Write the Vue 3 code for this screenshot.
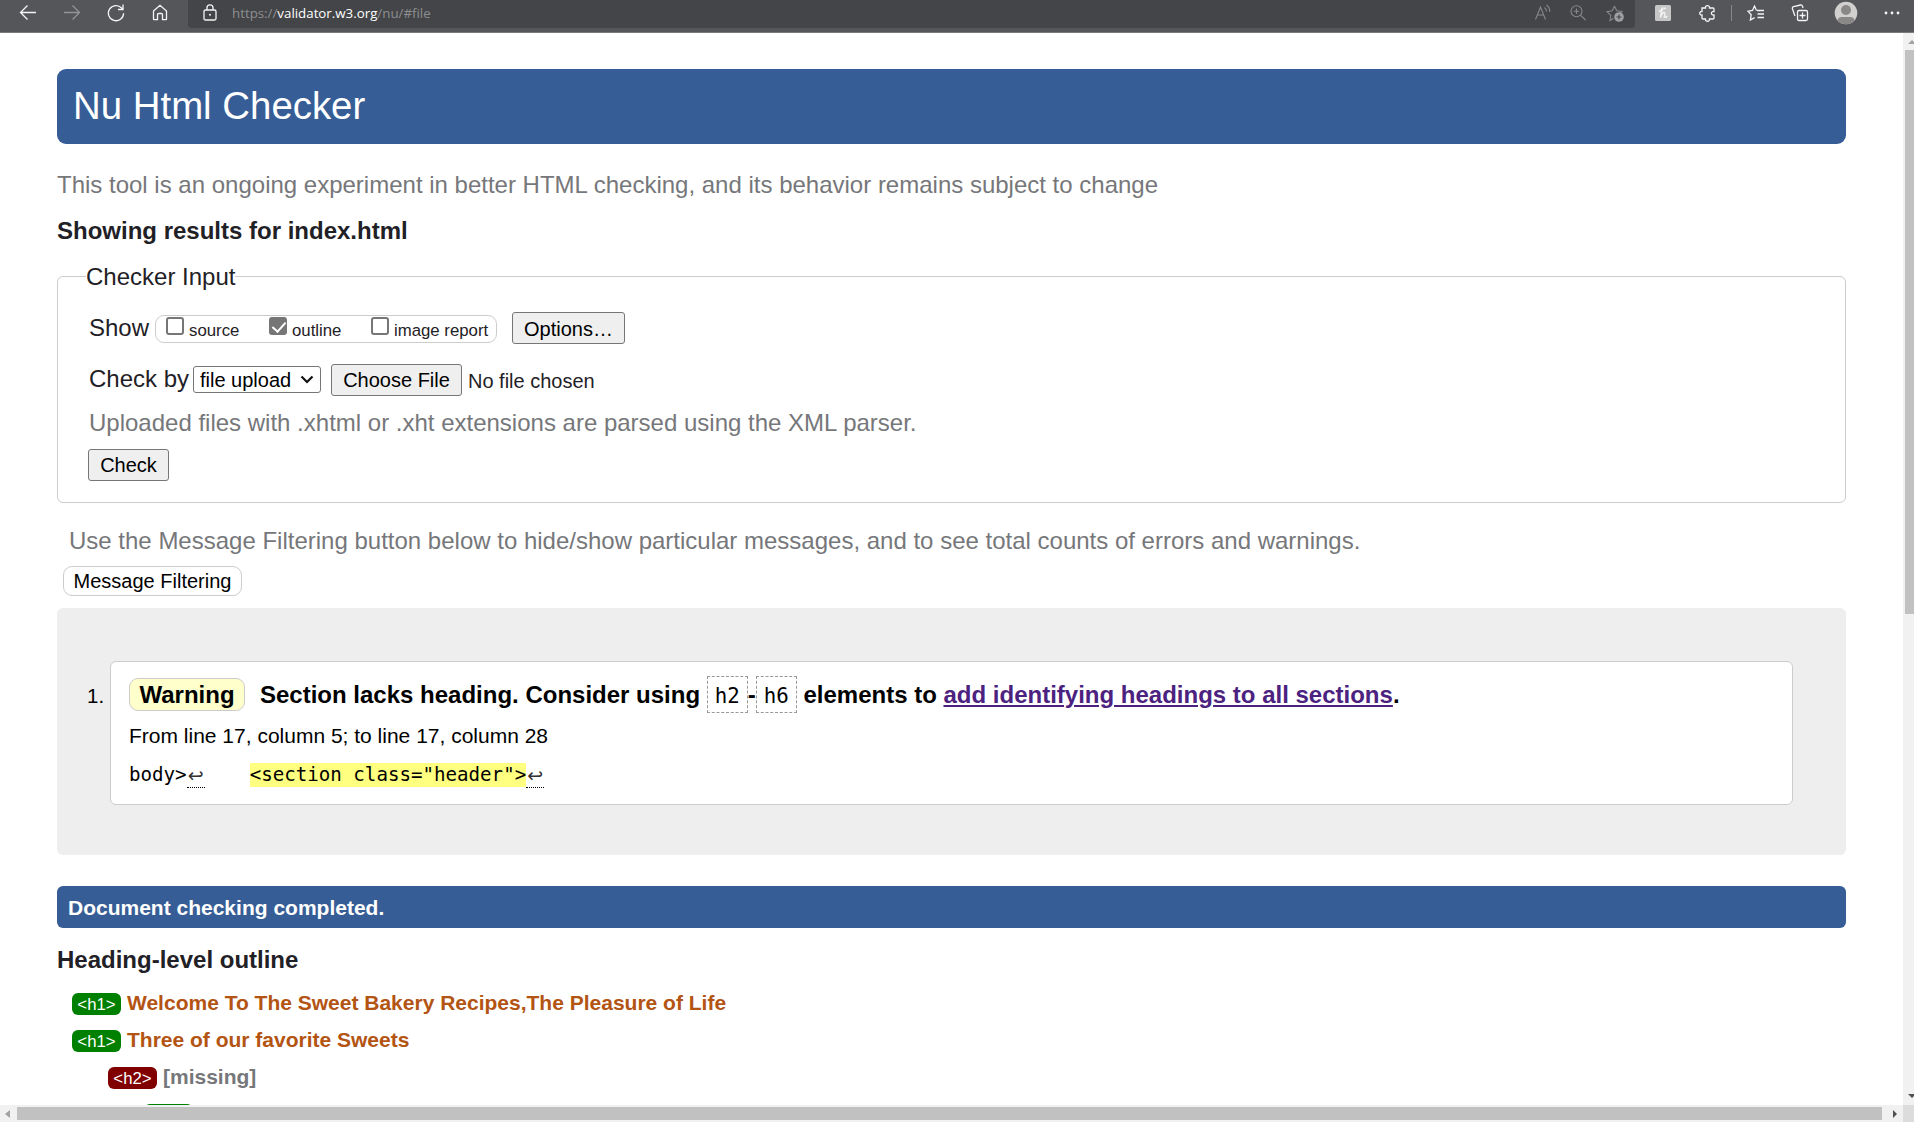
<script setup>
const outline = [
  { tag: '<h1>', text: 'Welcome To The Sweet Bakery Recipes,The Pleasure of Life', level: 1 },
  { tag: '<h1>', text: 'Three of our favorite Sweets', level: 1 },
  { tag: '<h2>', text: '[missing]', level: 2, missing: true },
  { tag: '', text: '', level: 3 },
]
</script>

<template>
  <div class="window">
    <header class="toolbar">
      <nav class="nav-icons">
        <svg width="18" height="18" viewBox="0 0 18 18"><path d="M17 8.500H1.500M8.500 1.500l-7 7 7 7" /></svg>
        <svg class="dim" width="18" height="18" viewBox="0 0 18 18"><path d="M1 8.500h15.500M9.500 1.500l7 7-7 7" /></svg>
        <svg width="18" height="18" viewBox="0 0 18 18"><path d="M16.600 9.200A7.600 7.600 0 1 1 14.600 4L16 5.400M16 .5v5h-5" /></svg>
        <svg width="18" height="18" viewBox="0 0 18 18"><path d="M2.500 7 9 1.300 15.500 7v8.200q0 .5-.5.5h-3.500V10.500q0-1-1-1h-3q-1 0-1 1v5.200H3q-.5 0-.5-.5z" /></svg>
      </nav>
      <div class="address">
        <svg class="lock" width="14" height="18" viewBox="0 0 14 18"><path d="M2.500 6h9q1.500 0 1.500 1.500v7q0 1.500-1.500 1.500h-9Q1 16 1 14.500v-7Q1 6 2.500 6zM4 6V3.800a3 3 0 0 1 6 0V6" /><circle class="solid" cx="7" cy="10.800" r="1" /></svg>
        <span class="url">https://<b>validator.w3.org</b>/nu/#file</span>
        <div class="address-icons">
          <svg width="18" height="18" viewBox="0 0 18 18"><path d="M2.500 15.500 7.500 3l5 12.500M4.300 11h6.500M11.500 3.500q2 1.500 2 4M13.500 1q3.500 2.500 3.200 7" /></svg>
          <svg width="18" height="18" viewBox="0 0 18 18"><path d="M13 7.200A5.500 5.500 0 1 1 2 7.200a5.500 5.500 0 0 1 11 0zM11.400 11.100 16.500 16M7.500 4.500v5.400M4.800 7.200h5.400" /></svg>
          <svg width="20" height="20" viewBox="0 0 20 20"><path d="m9.500 2 2.200 4.700 5.300.7-3.300 3.300M8.500 14.300l-3.500 2.200.9-5L2 7.700l5.300-1L9.500 2" /><circle class="solid" cx="14" cy="13" r="4.800" /><path class="cut" d="M14 10.500v5M11.500 13h5" /></svg>
        </div>
      </div>
      <div class="tools">
        <svg class="ext" width="16" height="16" viewBox="0 0 16 16"><rect class="tile" width="16" height="16" rx="1.500" /><path d="M4 6q4.200-.8 4-2.800-1-.8-1.400 1.500L5.500 12.500Q7 7.500 9 7.500q1.600.2.200 4.500 1.600.8 3-1M9 3.500l2-.5" /></svg>
        <svg class="puzzle" width="18" height="18" viewBox="0 0 18 18"><path d="M3 4h3.500c-.6-3 4.500-3.500 4 0H14q1 0 1 1v2.500c-3.500-.5-3.500 4 0 3.500V14q0 1-1 1h-3.500c.5 3-4.500 3-4 0H4q-1 0-1-1v-3c-3 .5-3-4 0-3.500z" /></svg>
        <i class="divider"></i>
        <svg class="fav" width="18" height="18" viewBox="0 0 18 18"><path d="M9.500 6.500 7.500 2 5.500 6.500 1 7.200l3.200 3.500L3.400 16l4.200-2.400M10 6.500h7M10.500 10H17M10.500 13.500H17" /></svg>
        <svg class="coll" width="18" height="18" viewBox="0 0 18 18"><path d="M8 6.500h7q1.500 0 1.500 1.500v7q0 1.500-1.500 1.500H8q-1.500 0-1.500-1.500V8Q6.500 6.500 8 6.500zM11.500 8.500v6M8.500 11.500h6M4 12 1.500 5Q1 3.200 2.500 2.700L9.500 1q1.500-.3 2 1.200l.5 1.800" /></svg>
        <svg class="avatar" width="24" height="24" viewBox="0 0 24 24"><circle cx="12" cy="12" r="11.300" fill="#d2d0ce" stroke="none" /><circle cx="12" cy="9" r="5" fill="#8a8886" stroke="none" /><path d="M3.500 19q1-3 4-3h9q3 0 4 3-3.500 4.300-8.500 4.300T3.500 19z" fill="#8a8886" stroke="none" /></svg>
        <svg class="more" width="16" height="4" viewBox="0 0 16 4"><circle class="solid" cx="2" cy="2" r="1.400" /><circle class="solid" cx="8" cy="2" r="1.400" /><circle class="solid" cx="14" cy="2" r="1.400" /></svg>
      </div>
    </header>

    <div class="viewport">
      <main class="page">
        <h1>Nu Html Checker</h1>
        <p class="intro">This tool is an ongoing experiment in better HTML checking, and its behavior remains subject to change</p>
        <h2>Showing results for index.html</h2>

        <fieldset>
          <legend>Checker Input</legend>
          <div class="row show-row">
            <span class="label">Show</span>
            <div class="checks">
              <label class="c1"><input type="checkbox" /><span>source</span></label>
              <label class="c2"><input type="checkbox" checked /><span>outline</span></label>
              <label class="c3"><input type="checkbox" /><span>image report</span></label>
            </div>
            <button class="options">Options…</button>
          </div>
          <div class="row by-row">
            <span class="label">Check by</span>
            <div class="select"><span>file upload</span><svg width="14" height="9" viewBox="0 0 14 9"><path d="m1.500 1.500 5.500 5.500 5.500-5.500" /></svg></div>
            <button class="choose">Choose File</button>
            <span class="nofile">No file chosen</span>
          </div>
          <p class="hint">Uploaded files with .xhtml or .xht extensions are parsed using the XML parser.</p>
          <button class="check">Check</button>
        </fieldset>

        <p class="filter-hint">Use the Message Filtering button below to hide/show particular messages, and to see total counts of errors and warnings.</p>
        <button class="filter">Message Filtering</button>

        <section class="results">
          <span class="num">1.</span>
          <div class="message">
            <p class="title"><span class="warning">Warning</span><span class="text">Section lacks heading. Consider using <code>h2</code>-<code>h6</code> elements to <a>add identifying headings to all sections</a>.</span></p>
            <p class="location">From line 17, column 5; to line 17, column 28</p>
            <p class="extract"><span>body&gt;</span><span class="lf">↩</span><span class="gap"></span><mark>&lt;section class="header"&gt;</mark><span class="lf">↩</span></p>
          </div>
        </section>

        <p class="done">Document checking completed.</p>
        <h2 class="outline-title">Heading-level outline</h2>
        <ul class="outline">
          <li v-for="(item, i) in outline" :key="i" :class="['level' + item.level, { missing: item.missing }]">
            <span class="tag">{{ item.tag }}</span><span class="heading">{{ item.text }}</span>
          </li>
        </ul>
      </main>
      <aside class="vbar">
        <svg class="up" width="8" height="5" viewBox="0 0 8 5"><path d="M0 5 4 1l4 4z" fill="#a3a3a3" /></svg>
        <i class="thumb"></i>
        <svg class="down" width="8" height="5" viewBox="0 0 8 5"><path d="M0 0h8L4 4z" fill="#505050" /></svg>
      </aside>
    </div>
    <footer class="hbar">
      <svg class="left" width="5" height="8" viewBox="0 0 5 8"><path d="M5 0v8L0 4z" fill="#a3a3a3" /></svg>
      <i class="thumb"></i>
      <svg class="right" width="5" height="8" viewBox="0 0 5 8"><path d="M0 0v8l4-4z" fill="#505050" /></svg>
      <i class="corner"></i>
    </footer>
  </div>
</template>

<style>
body {
  overflow: hidden;
}
</style>

<style scoped>
* {
  box-sizing: border-box;
}
.window {
  width: 1914px;
  height: 1122px;
  display: flex;
  flex-direction: column;
  overflow: hidden;
  background: #fff;
  color: #1f2126;
  font: 24px/30px "Liberation Sans", Arial, sans-serif;
}
h1, h2, p, ul, fieldset {
  margin: 0;
  padding: 0;
}
.toolbar {
  flex: none;
  height: 33px;
  display: flex;
  background: #55565a;
  border-bottom: 1px solid #7b7b7d;
}
.toolbar svg {
  flex: none;
  fill: none;
  stroke: #f4f4f4;
  stroke-width: 1.3;
}
.toolbar svg .solid {
  fill: #f4f4f4;
  stroke: none;
}
.nav-icons {
  width: 188px;
  padding: 4px 0 0 19px;
  display: flex;
  gap: 26px;
}
.toolbar .nav-icons .dim {
  stroke: #929396;
}
.address {
  width: 1447px;
  height: 28px;
  padding: 4px 10px 0 15px;
  display: flex;
  background: #444548;
  border-radius: 0 0 4px 4px;
}
.url {
  margin: -1px 0 0 15px;
  color: #8d8e90;
  font: 13.3px/20px "Open Sans", "Noto Sans", sans-serif;
}
.url b {
  color: #fff;
  font-weight: 400;
}
.address-icons {
  margin-left: auto;
  display: flex;
  gap: 18px;
}
.toolbar .address-icons svg {
  stroke: #87888b;
  stroke-width: 1.1;
}
.toolbar .address-icons .solid {
  fill: #a0a0a2;
}
.address-icons .cut {
  stroke: #444548;
}
.tools {
  display: flex;
  align-items: flex-start;
}
.ext {
  margin: 5px 0 0 20px;
}
.tools .tile {
  fill: #c6c6c6;
  stroke: none;
}
.puzzle {
  margin: 4px 0 0 28px;
}
.divider {
  width: 1px;
  height: 16px;
  margin: 5px 0 0 14px;
  background: #87888b;
}
.fav {
  margin: 4px 0 0 15px;
}
.coll {
  margin: 4px 0 0 26px;
}
.avatar {
  margin: 1px 0 0 25px;
}
.more {
  margin: 11px 0 0 26px;
}
.viewport {
  height: 1072px;
  display: flex;
  overflow: hidden;
}
.page {
  width: 1903px;
  padding: 36px 57px 0;
}
h1 {
  height: 75px;
  padding: 0 16px;
  color: #fff;
  background: #365d95;
  border-radius: 9px;
  font-size: 38.400px;
  font-weight: 400;
  line-height: 73px;
}
.intro {
  margin-top: 26px;
  color: #76777a;
}
h2 {
  margin-top: 16px;
  font-size: 24px;
  line-height: 30px;
}
fieldset {
  height: 241px;
  margin-top: 16px;
  padding-left: 30px;
  border: 1px solid #ccc;
  border-radius: 6px;
  min-width: 0;
}
legend {
  margin-left: -2px;
  padding: 0;
  height: 29px;
}
.row {
  display: flex;
  align-items: flex-start;
}
.show-row {
  height: 52px;
  padding-top: 21px;
}
.show-row .label {
  width: 67px;
  margin-top: 1px;
  padding-left: 1px;
}
.checks {
  width: 342px;
  height: 28px;
  margin-top: 3px;
  padding-left: 10px;
  display: flex;
  border: 1px solid #ccc;
  border-radius: 9px;
  font-size: 16.800px;
  line-height: 30px;
}
label {
  display: flex;
}
.c1 {
  width: 103px;
}
.c2 {
  width: 102px;
}
label span {
  margin-left: 5px;
  white-space: nowrap;
}
input {
  appearance: none;
  flex: none;
  width: 18px;
  height: 18px;
  margin: 1px 0 0;
  border: 2px solid #767676;
  border-radius: 3px;
}
input:checked {
  background: #767676;
}
input:checked::after {
  content: "";
  display: block;
  width: 6px;
  height: 11px;
  margin: 0 0 0 4px;
  border: solid #fff;
  border-width: 0 2.500px 2.500px 0;
  transform: rotate(42deg);
}
button {
  height: 32px;
  padding: 0;
  background: #efefef;
  border: 1px solid #767676;
  border-radius: 3px;
  color: #000;
  font: 20px/28px "Liberation Sans", Arial, sans-serif;
}
.options {
  width: 113px;
  margin-left: 15px;
  padding-top: 1px;
}
.by-row {
  height: 52px;
  padding-top: 20px;
}
.by-row .label {
  width: 105px;
  margin-top: 1px;
  padding-left: 1px;
}
.select {
  width: 128px;
  height: 27px;
  margin-top: 3px;
  padding: 0 6px;
  display: flex;
  align-items: center;
  justify-content: space-between;
  border: 1px solid #767676;
  border-radius: 3px;
  color: #000;
  font-size: 20px;
  line-height: 24px;
}
.select svg {
  fill: none;
  stroke: #111;
  stroke-width: 2.200;
}
.choose {
  width: 131px;
  margin: 1px 0 0 10px;
}
.nofile {
  margin: 2px 0 0 6px;
  font-size: 20px;
  line-height: 32px;
}
.hint {
  margin-top: 13px;
  padding-left: 1px;
  color: #76777a;
}
.check {
  display: block;
  width: 81px;
  margin-top: 11px;
  padding-bottom: 1px;
}
.filter-hint {
  margin: 23px 0 0 12px;
  color: #76777a;
}
.filter {
  display: block;
  width: 179px;
  height: 30px;
  margin: 10px 0 0 6px;
  background: #fff;
  border: 1px solid #ccc;
  border-radius: 9px;
}
.results {
  height: 247px;
  margin-top: 12px;
  padding: 53px 0 0 30px;
  display: flex;
  background: #eee;
  border-radius: 6px;
  color: #000;
}
.num {
  width: 23px;
  margin-top: 20px;
  font-size: 20.500px;
}
.message {
  width: 1683px;
  height: 144px;
  padding: 13px 0 0 18px;
  background: #fff;
  border: 1px solid #ccc;
  border-radius: 6px;
}
.title {
  height: 40px;
  display: flex;
  font-weight: 700;
  line-height: 40px;
}
.warning {
  width: 116px;
  height: 33px;
  margin: 3px 15px 0 0;
  border: 1px solid #ccc;
  border-radius: 9px;
  background: #ffc;
  text-align: center;
  line-height: 32px;
}
code {
  display: inline-block;
  width: 41px;
  height: 37px;
  border: 1px dashed #999;
  text-align: center;
  font: 400 20.800px/38px "DejaVu Sans Mono", monospace;
}
a {
  color: #4c2280;
  text-decoration: underline 2px;
  text-underline-offset: 2px;
}
.location {
  margin-top: 6px;
  font-size: 21px;
}
.extract {
  margin-top: 9px;
  display: flex;
  font: 19.150px/30px "DejaVu Sans Mono", monospace;
}
.extract .lf {
  width: 18px;
  height: 28px;
  border-bottom: 1px dotted #000;
  text-align: center;
  color: #333;
  font: 19px/31px "DejaVu Sans", sans-serif;
}
.gap {
  width: 45px;
}
mark {
  height: 24px;
  margin-top: 3px;
  background: #ffff80;
  line-height: 24px;
}
.done {
  height: 42px;
  margin-top: 31px;
  padding-left: 11px;
  border-radius: 6px;
  background: #365d95;
  color: #fff;
  font-size: 21px;
  font-weight: 700;
  line-height: 43px;
}
.outline-title {
  margin-top: 17px;
}
.outline {
  margin-top: 11px;
  list-style: none;
}
li {
  height: 37px;
  padding-top: 2px;
  display: flex;
  align-items: flex-start;
  color: #b35413;
  font-size: 21px;
  font-weight: 700;
}
.level1 {
  padding-left: 15px;
}
.level2 {
  padding-left: 51px;
}
.level3 {
  padding-left: 87px;
}
.tag {
  width: 49px;
  height: 22px;
  margin: 5px 6px 0 0;
  border-radius: 6px;
  background: #008000;
  color: #fff;
  text-align: center;
  font-size: 16.800px;
  font-weight: 400;
  line-height: 23px;
}
.missing .tag {
  background: #800000;
}
.missing .heading {
  color: #76777a;
}
.vbar {
  width: 11px;
  display: flex;
  flex-direction: column;
  background: #f1f1f1;
}
.vbar svg {
  flex: none;
  margin-left: 5px;
}
.vbar .up {
  margin-top: 6px;
}
.vbar .thumb {
  height: 564px;
  margin: 6px 0 0 2px;
  background: #c1c1c1;
}
.vbar .down {
  margin-top: auto;
  margin-bottom: 6px;
}
.hbar {
  height: 17px;
  display: flex;
  align-items: center;
  background: #f1f1f1;
}
.hbar .left {
  margin-left: 5px;
}
.hbar .thumb {
  width: 1865px;
  height: 13px;
  margin-left: 7px;
  background: #c1c1c1;
}
.hbar .right {
  margin-left: 11px;
}
.hbar .corner {
  width: 11px;
  height: 17px;
  margin-left: auto;
  background: #dcdcdc;
}
</style>
